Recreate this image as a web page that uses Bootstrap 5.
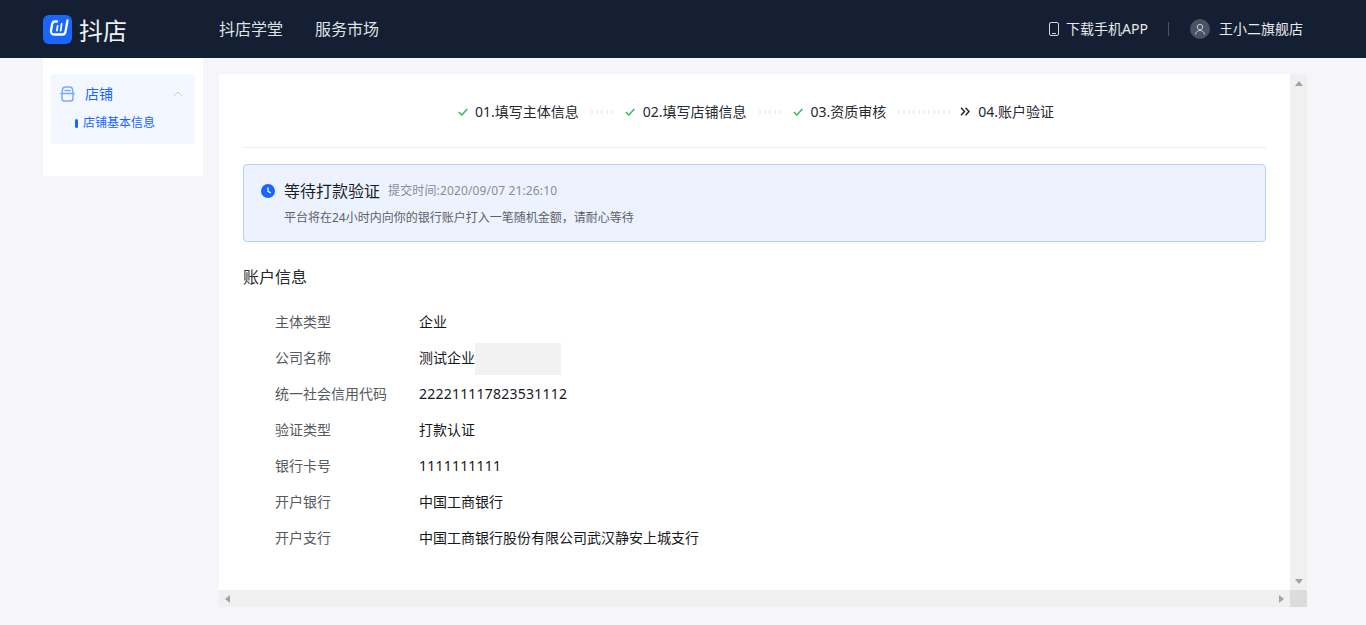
<!DOCTYPE html>
<html lang="zh-CN">
<head>
<meta charset="utf-8">
<title>抖店</title>
<link rel="stylesheet" href="https://cdn.jsdelivr.net/npm/bootstrap@5.3.0/dist/css/bootstrap.min.css">
<style>
html,body{height:100%;overflow:hidden}
body{background:#f5f5fa;font-family:"Noto Sans","Noto Sans CJK SC",sans-serif;font-size:14px;color:#252931}
.shop-top{height:58px;background:#141f33;padding:0 63px 0 43px;color:#e6e8ec}
.shop-logo{width:29px;height:29px;background:#1966ff;border-radius:6px}
.logo-word{font-family:"Noto Sans CJK SC",sans-serif;font-size:24px;font-weight:400;line-height:29px;margin-left:7px;width:48px;color:#eef0f2}
.top-nav{margin-left:92px;gap:32px;font-size:16px;line-height:24px;color:#dfe2e6}
.top-right{color:#e6e8ec;line-height:20px}
.phone-ico{margin-right:7px}
.top-sep{width:1px;height:14px;background:#4b5362;margin:0 21px 0 20px}
.top-avatar{width:20px;height:20px;border-radius:50%;background:#4a5364;margin-right:9px}
.shop-main{padding:0 59px 0 43px;gap:16px}
.side-panel{width:160px;height:118px;background:#fff;padding:16px 8px}
.side-box{background:#f3f7ff;border-radius:4px;height:70px;color:#1966ff;padding-top:10px}
.side-head{height:20px;padding:0 12px 0 9px;line-height:20px}
.side-name{margin-left:10px;flex:1}
.side-sub{margin:10px 0 0 24px;font-size:12px;line-height:18px}
.side-mark{width:3px;height:9px;border-radius:2px;background:#1966ff;margin-right:5px}
.work-area{margin-top:16px;width:1088px;height:533px}
.work-row{height:516px}
.work-body{width:1071px;background:#fff;padding:0 24px}
.bar-v{width:17px;background:#f0f0f0;padding:7px 0 6px}
.bar-h{height:17px;background:#f0f0f0}
.bar-track{width:1071px;padding:0 6px}
.bar-corner{width:17px;background:#dcdcdc}
.steps-wrap{height:74px;border-bottom:1px solid #ececee;padding:2px 0 0 214px;line-height:20px}
.step-ico{margin-left:1px;margin-right:-1px}
.step-text{margin-left:8px;color:#252931}
.step-dots{height:4px;margin:0 12px;background:repeating-linear-gradient(90deg,#f0f0f0 0 2px,transparent 2px 5px)}
.dots-a{width:22px}
.dots-b{width:54px;margin-right:8px}
.note-box{margin-top:16px;height:78px;background:#ecf3ff;border:1px solid #b9d0fa;border-radius:4px;padding:15px 17px}
.note-title{font-size:16px;line-height:22px;margin-left:9px;color:#1a1d24}
.note-time{font-size:12px;color:#8a8d93;margin-left:8px;line-height:22px;letter-spacing:.14px}
.note-desc{font-size:12px;line-height:18px;color:#5e6167;margin:7px 0 0 23px}
.info-title{font-size:16px;line-height:24px;margin-top:23px;color:#252931}
.info-list{margin-top:15px;padding-left:32px}
.info-row{height:36px;line-height:20px}
.info-key{width:144px;color:#565a61}
.info-val{color:#16181d}
.num-val{letter-spacing:.22px}
.masked{width:86px;height:32px;background:#f2f2f2;margin-top:1px}
</style>
</head>
<body>
<header class="shop-top d-flex align-items-center">
  <div class="shop-logo">
    <svg class="d-block" width="29" height="29" viewBox="0 0 29 29" fill="none" stroke="#fff" stroke-linecap="round"><path d="M14 6.500H12C10 6.500 9.500 7.500 9.200 9L8 15.500C7.700 18 8.800 19.500 11 19.500H19.500C21.500 19.500 22.200 18.500 22.500 16.500L24.500 5.500" stroke-width="2.300"/><path d="M14.600 11L13.900 15.500M18.600 9L17.700 15.500" stroke-width="1.800"/></svg>
  </div>
  <div class="logo-word">抖店</div>
  <nav class="top-nav d-flex"><span>抖店学堂</span><span>服务市场</span></nav>
  <div class="top-right d-flex align-items-center ms-auto">
    <svg class="phone-ico" width="10" height="14" viewBox="0 0 10 14" fill="none" stroke="#d5d8dd"><rect x=".5" y=".5" width="9" height="13" rx="1.500"/><path d="M3 11.500h4"/></svg>
    <span>下载手机APP</span>
    <span class="top-sep"></span>
    <span class="top-avatar d-flex align-items-center justify-content-center">
      <svg width="12" height="12" viewBox="0 0 12 12" fill="none" stroke="#c3c7ce"><circle cx="6" cy="4" r="2.700"/><path d="M1.500 11.500C1.700 9 3.500 7.500 6 7.500s4.300 1.500 4.500 4"/></svg>
    </span>
    <span>王小二旗舰店</span>
  </div>
</header>
<div class="shop-main d-flex align-items-start">
  <aside class="side-panel">
    <div class="side-box">
      <div class="side-head d-flex align-items-center">
        <svg width="15" height="16" viewBox="0 0 15 16" fill="none" stroke="#7fa9f8" stroke-width="1.500" stroke-linecap="round"><path d="M2.300 7V4.500C2.300 2.300 3.800 1 5.800 1h3.400C11.200 1 12.700 2.300 12.700 4.500V7"/><path d="M.8 7.500h13.400"/><path d="M2 8v4.500C2 14 3 15 4.500 15h6c1.500 0 2.500-1 2.500-2.500V8"/><path d="M5 4.500h5"/></svg>
        <span class="side-name">店铺</span>
        <svg width="10" height="6" viewBox="0 0 10 6" fill="none" stroke="#c9ccd2"><path d="M1 5l4-4 4 4"/></svg>
      </div>
      <div class="side-sub d-flex align-items-center"><span class="side-mark"></span><span>店铺基本信息</span></div>
    </div>
  </aside>
  <section class="work-area d-flex flex-column">
    <div class="work-row d-flex">
      <div class="work-body">
        <div class="steps-wrap d-flex align-items-center">
          <svg class="step-ico" width="10" height="8" viewBox="0 0 10 8" fill="none" stroke="#2bbf5e" stroke-width="1.500"><path d="M.8 4l3 3L9.300 1"/></svg>
          <span class="step-text">01.填写主体信息</span><span class="step-dots dots-a"></span>
          <svg width="10" height="8" viewBox="0 0 10 8" fill="none" stroke="#2bbf5e" stroke-width="1.500"><path d="M.8 4l3 3L9.300 1"/></svg>
          <span class="step-text">02.填写店铺信息</span><span class="step-dots dots-a"></span>
          <svg width="10" height="8" viewBox="0 0 10 8" fill="none" stroke="#2bbf5e" stroke-width="1.500"><path d="M.8 4l3 3L9.300 1"/></svg>
          <span class="step-text">03.资质审核</span><span class="step-dots dots-b"></span>
          <svg width="10" height="9" viewBox="0 0 10 9" fill="none" stroke="#252931" stroke-width="1.500"><path d="M1 .8l3.500 3.700L1 8.200M5.500 .8L9 4.500 5.500 8.200"/></svg>
          <span class="step-text">04.账户验证</span>
        </div>
        <div class="note-box">
          <div class="d-flex align-items-center">
            <svg width="14" height="14" viewBox="0 0 14 14"><circle cx="7" cy="7" r="7" fill="#1966ff"/><path d="M7 3.500V7.300L9.800 9" fill="none" stroke="#fff" stroke-width="1.300"/></svg>
            <span class="note-title">等待打款验证</span>
            <span class="note-time">提交时间:2020/09/07 21:26:10</span>
          </div>
          <div class="note-desc">平台将在24小时内向你的银行账户打入一笔随机金额，请耐心等待</div>
        </div>
        <div class="info-title">账户信息</div>
        <div class="info-list">
          <div class="info-row d-flex align-items-center"><span class="info-key">主体类型</span><span class="info-val">企业</span></div>
          <div class="info-row d-flex align-items-center"><span class="info-key">公司名称</span><span class="info-val">测试企业</span><span class="masked"></span></div>
          <div class="info-row d-flex align-items-center"><span class="info-key">统一社会信用代码</span><span class="info-val num-val">222211117823531112</span></div>
          <div class="info-row d-flex align-items-center"><span class="info-key">验证类型</span><span class="info-val">打款认证</span></div>
          <div class="info-row d-flex align-items-center"><span class="info-key">银行卡号</span><span class="info-val num-val">1111111111</span></div>
          <div class="info-row d-flex align-items-center"><span class="info-key">开户银行</span><span class="info-val">中国工商银行</span></div>
          <div class="info-row d-flex align-items-center"><span class="info-key">开户支行</span><span class="info-val">中国工商银行股份有限公司武汉静安上城支行</span></div>
        </div>
      </div>
      <div class="bar-v d-flex flex-column align-items-center justify-content-between">
        <svg width="8" height="5" viewBox="0 0 8 5"><path d="M4 0L8 5H0z" fill="#a3a3a3"/></svg>
        <svg width="8" height="5" viewBox="0 0 8 5"><path d="M0 0h8L4 5z" fill="#a3a3a3"/></svg>
      </div>
    </div>
    <div class="bar-h d-flex">
      <div class="bar-track d-flex align-items-center justify-content-between">
        <svg width="5" height="8" viewBox="0 0 5 8"><path d="M5 0v8L0 4z" fill="#a3a3a3"/></svg>
        <svg width="5" height="8" viewBox="0 0 5 8"><path d="M0 0v8l5-4z" fill="#a3a3a3"/></svg>
      </div>
      <div class="bar-corner"></div>
    </div>
  </section>
</div>
<script src="https://cdn.jsdelivr.net/npm/bootstrap@5.3.0/dist/js/bootstrap.bundle.min.js"></script>
</body>
</html>
